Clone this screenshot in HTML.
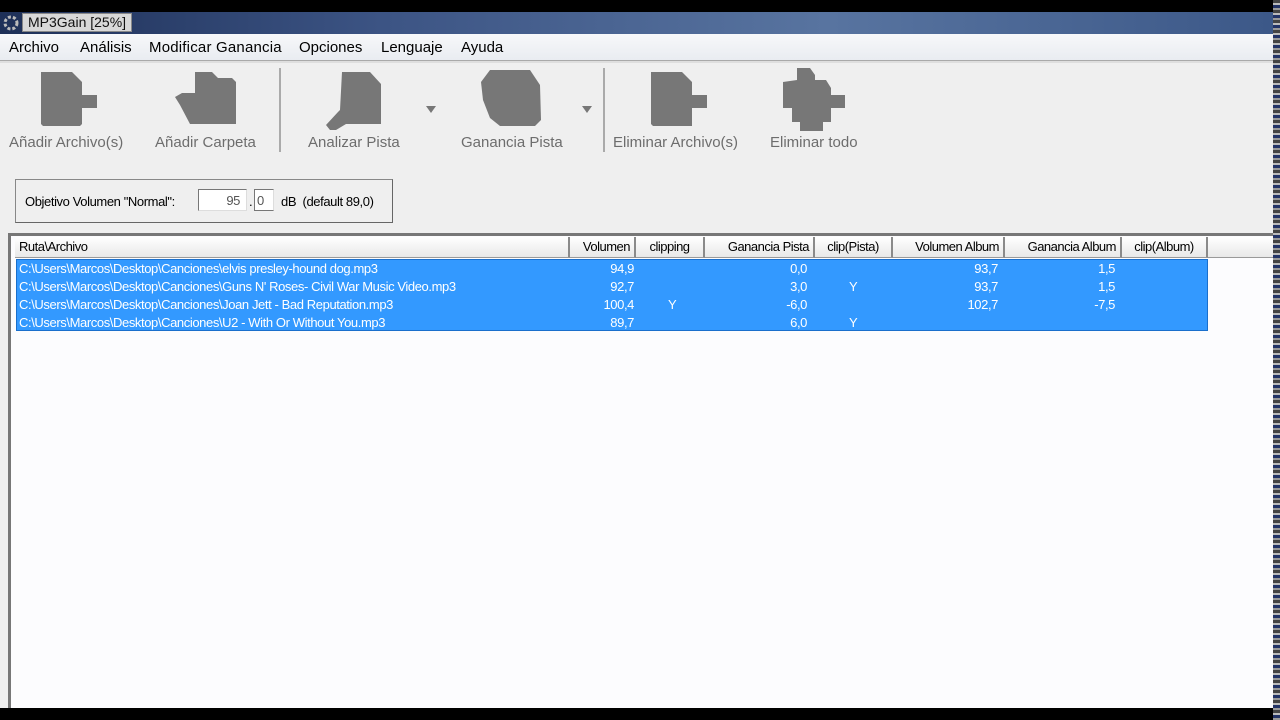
<!DOCTYPE html>
<html><head><meta charset="utf-8"><style>
*{margin:0;padding:0;box-sizing:border-box}
body{width:1280px;height:720px;background:#000;position:relative;overflow:hidden;font-family:"Liberation Sans",sans-serif}
.a{position:absolute}
.bg{left:0;top:34px;width:1273px;height:674px;background:#efefef}
.title{left:0;top:12px;width:1273px;height:22px;background:linear-gradient(90deg,#1e3058,#3c5484 30%,#5874a0 65%,#3c5888)}
.menu{left:0;top:34px;width:1273px;height:27px;background:linear-gradient(#f7f8fa,#e9ecf1);border-bottom:1px solid #a9a9a9;font-size:15px;color:#000}
.menu span{position:absolute;top:5px}
.tb{left:0;top:62px;width:1273px;height:171px;background:#efefef}
.lbl{position:absolute;top:134px;font-size:15px;color:#6d6d6d}
.list{left:8px;top:233px;width:1265px;height:475px;background:#fcfcfe;border-left:3px solid #777;border-top:3px solid #777}
.hdr{position:absolute;top:237px;height:21px;background:linear-gradient(#fff,#e8e8e8);border-right:2px solid #8a8a8a;border-bottom:1px solid #999;font-size:13px;letter-spacing:-0.5px;line-height:20px;padding:0 4px;color:#000;white-space:nowrap}
.sel{left:16px;top:259px;width:1192px;height:72px;background:#3399ff;border:1px solid #1a6fcc}
.r{position:absolute;font-size:13px;color:#fff;letter-spacing:-0.4px;white-space:nowrap}
.n{text-align:right}
.strip{left:1273px;top:0;width:7px;height:720px;background:repeating-linear-gradient(#444 0 3px,#bbb 3px 5px,#236 5px 8px,#999 8px 10px)}
</style></head><body>
<div class="a bg"></div>
<div class="a title"><svg class="a" style="left:2px;top:3px" width="18" height="16"><circle cx="9" cy="8" r="6" fill="none" stroke="#bbb" stroke-width="3" stroke-dasharray="3 2"/></svg>
<div class="a" style="left:22px;top:1px;width:110px;height:19px;background:#d8d8d8;border:1px solid #888;font-size:14px;padding-left:5px;line-height:17px;color:#111">MP3Gain [25%]</div></div>
<div class="a menu"><span style="left:9px">Archivo</span><span style="left:80px">Análisis</span><span style="left:149px;letter-spacing:0.2px">Modificar Ganancia</span><span style="left:299px">Opciones</span><span style="left:381px">Lenguaje</span><span style="left:461px">Ayuda</span></div>
<div class="a tb">
<svg class="a" style="left:0;top:-62px" width="1273" height="233">
<g fill="#777">
<polygon points="41,72 72,72 82,82 82,95 97,95 97,108 82,108 82,124 80,126 43,126 41,124"/>
<polygon points="195,72 212,72 218,78 232,78 236,82 236,124 190,124 180,105 175,97 182,93 195,93"/>
<polygon points="342,72 370,72 381,84 381,124 346,124 336,130 330,130 326,125 338,112 340,110"/>
<path d="M490,70 L530,70 L540,85 L541,120 L535,126 L500,126 L490,118 L483,100 L481,82 Z"/>
<polygon points="651,72 682,72 692,82 692,95 707,95 707,108 692,108 692,126 653,126 651,124"/>
<polygon points="797,68 810,68 815,75 815,80 826,80 831,88 831,95 845,95 845,108 831,108 831,122 823,122 823,131 800,131 800,122 792,122 792,108 783,108 783,82 797,80"/>
<polygon points="426,106 436,106 431,113"/><polygon points="582,106 592,106 587,113"/>
</g>
<rect x="279" y="68" width="2" height="84" fill="#aaa"/><rect x="603" y="68" width="2" height="84" fill="#aaa"/>
<line x1="0" y1="62" x2="1273" y2="62" stroke="#ccc"/>
</svg>
<span class="lbl" style="left:9px;top:72px">Añadir Archivo(s)</span>
<span class="lbl" style="left:155px;top:72px">Añadir Carpeta</span>
<span class="lbl" style="left:308px;top:72px">Analizar Pista</span>
<span class="lbl" style="left:461px;top:72px">Ganancia Pista</span>
<span class="lbl" style="left:613px;top:72px">Eliminar Archivo(s)</span>
<span class="lbl" style="left:770px;top:72px">Eliminar todo</span>
<div class="a" style="left:15px;top:117px;width:378px;height:44px;border:1px solid #888;border-right-color:#666;border-bottom-color:#666;background:#efefef;font-size:13px;letter-spacing:-0.4px">
<span class="a" style="left:9px;top:14px">Objetivo Volumen "Normal":</span>
<span class="a" style="left:182px;top:9px;width:49px;height:22px;background:#fff;border:1px solid #777;border-right-color:#ddd;border-bottom-color:#ddd;text-align:right;padding:3px 6px 0 0;color:#555">95</span>
<span class="a" style="left:233px;top:14px">.</span>
<span class="a" style="left:238px;top:9px;width:20px;height:22px;background:#fff;border:1px solid #777;border-right-color:#ddd;padding:3px 0 0 2px;color:#555">0</span>
<span class="a" style="left:265px;top:14px">dB&nbsp; (default 89,0)</span>
</div>
</div>
<div class="a list"></div>
<div class="hdr" style="left:15px;width:555px">Ruta\Archivo</div>
<div class="hdr" style="left:570px;width:66px;text-align:right">Volumen</div>
<div class="hdr" style="left:636px;width:69px;text-align:center">clipping</div>
<div class="hdr" style="left:705px;width:110px;text-align:right">Ganancia Pista</div>
<div class="hdr" style="left:815px;width:78px;text-align:center">clip(Pista)</div>
<div class="hdr" style="left:893px;width:112px;text-align:right">Volumen Album</div>
<div class="hdr" style="left:1005px;width:117px;text-align:right">Ganancia Album</div>
<div class="hdr" style="left:1122px;width:86px;text-align:center">clip(Album)</div>
<div class="hdr" style="left:1208px;width:65px;border-right:none"></div>
<div class="a sel"></div>
<div class="r" style="left:19px;top:261px">C:\Users\Marcos\Desktop\Canciones\elvis presley-hound dog.mp3</div>
<div class="r" style="left:19px;top:279px">C:\Users\Marcos\Desktop\Canciones\Guns N' Roses- Civil War Music Video.mp3</div>
<div class="r" style="left:19px;top:297px">C:\Users\Marcos\Desktop\Canciones\Joan Jett - Bad Reputation.mp3</div>
<div class="r" style="left:19px;top:315px">C:\Users\Marcos\Desktop\Canciones\U2 - With Or Without You.mp3</div>
<div class="r n" style="left:570px;width:64px;top:261px">94,9</div>
<div class="r n" style="left:570px;width:64px;top:279px">92,7</div>
<div class="r n" style="left:570px;width:64px;top:297px">100,4</div>
<div class="r n" style="left:570px;width:64px;top:315px">89,7</div>
<div class="r" style="left:668px;top:297px">Y</div>
<div class="r n" style="left:705px;width:102px;top:261px">0,0</div>
<div class="r n" style="left:705px;width:102px;top:279px">3,0</div>
<div class="r n" style="left:705px;width:102px;top:297px">-6,0</div>
<div class="r n" style="left:705px;width:102px;top:315px">6,0</div>
<div class="r" style="left:849px;top:279px">Y</div>
<div class="r" style="left:849px;top:315px">Y</div>
<div class="r n" style="left:893px;width:105px;top:261px">93,7</div>
<div class="r n" style="left:893px;width:105px;top:279px">93,7</div>
<div class="r n" style="left:893px;width:105px;top:297px">102,7</div>
<div class="r n" style="left:1005px;width:110px;top:261px">1,5</div>
<div class="r n" style="left:1005px;width:110px;top:279px">1,5</div>
<div class="r n" style="left:1005px;width:110px;top:297px">-7,5</div>
<div class="a strip"></div>
</body></html>
